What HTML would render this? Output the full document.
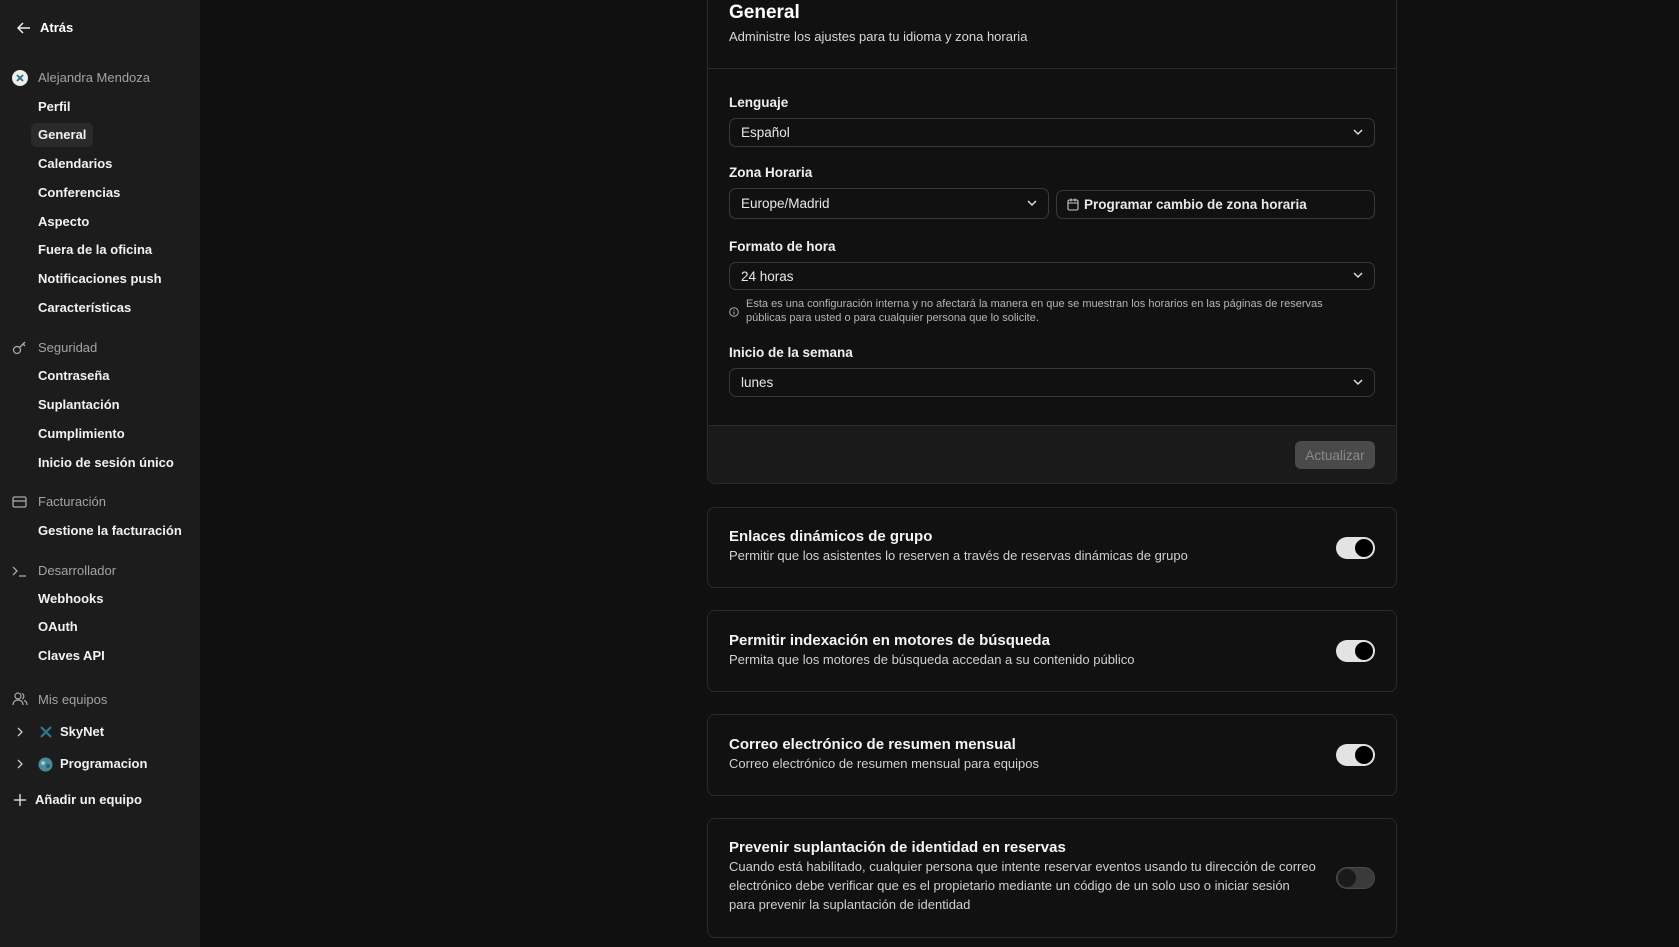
<!DOCTYPE html>
<html><head><meta charset="utf-8"><style>
*{box-sizing:border-box;margin:0;padding:0}
body{width:1679px;height:947px;overflow:hidden;background:#101010;font-family:"Liberation Sans",sans-serif;color:#fff;position:relative}
.side{position:absolute;left:0;top:0;width:200px;height:947px;background:#1c1c1c}
.a{position:absolute;font-size:13px;white-space:nowrap}
.it{left:38px;font-weight:bold;color:#f2f2f2}
.grp{left:38px;color:#a3a3a3}
.ic{position:absolute;left:12px}
.card{position:absolute;left:707px;width:690px;border:1px solid #2a2a2a;border-radius:8px;background:#111}
.sel{position:absolute;border:1px solid #3a3a3a;border-radius:7px;font-size:13.5px;color:#e8e8e8;padding-left:11px;display:flex;align-items:center}
.chev{position:absolute;right:11px;top:50%;margin-top:-4px}
.lbl{position:absolute;left:729px;font-size:13.5px;font-weight:bold;color:#f0f0f0}
.tg{position:absolute;left:1336px;width:39px;height:22px;border-radius:11px;background:#e3e3e3}
.tg::after{content:"";position:absolute;right:2px;top:2px;width:18px;height:18px;border-radius:50%;background:#000}
.tg.off{background:#3a3a3a;border:1px solid #4a4a4a}
.tg.off::after{left:1px;right:auto;top:1px;background:#1a1a1a}
.t{position:absolute;left:729px;font-size:15px;font-weight:bold;color:#f4f4f4}
.d{position:absolute;left:729px;font-size:13px;color:#d0d0d0;line-height:19px}
</style></head><body>
<div class="side">
<svg class="ic" style="top:22px;left:17px" width="14" height="12" viewBox="0 0 14 12"><path d="M13 6H1M6 1L1 6l5 5" stroke="#eee" stroke-width="1.5" fill="none"/></svg>
<div class="a" style="left:40px;top:20px;font-weight:bold">Atrás</div>
<svg class="ic" style="top:70px" width="16" height="16"><circle cx="8" cy="8" r="8" fill="#eee"/><path d="M5 5l6 6M11 5l-6 6" stroke="#2a6f8a" stroke-width="1.8"/></svg>
<div class="a grp" style="top:70px">Alejandra Mendoza</div>
<div class="a it" style="top:99px">Perfil</div>
<div style="position:absolute;left:31px;top:123px;width:62px;height:24px;border-radius:5px;background:#2a2a2a"></div>
<div class="a it" style="top:127px">General</div>
<div class="a it" style="top:156px">Calendarios</div>
<div class="a it" style="top:185px">Conferencias</div>
<div class="a it" style="top:214px">Aspecto</div>
<div class="a it" style="top:242px">Fuera de la oficina</div>
<div class="a it" style="top:271px">Notificaciones push</div>
<div class="a it" style="top:300px">Características</div>
<svg class="ic" style="top:341px" width="16" height="14"><circle cx="5" cy="9" r="3.5" stroke="#aaa" fill="none" stroke-width="1.3"/><path d="M7.5 6.5L13 1M11 3l2 2" stroke="#aaa" stroke-width="1.3" fill="none"/></svg>
<div class="a grp" style="top:340px">Seguridad</div>
<div class="a it" style="top:368px">Contraseña</div>
<div class="a it" style="top:397px">Suplantación</div>
<div class="a it" style="top:426px">Cumplimiento</div>
<div class="a it" style="top:455px">Inicio de sesión único</div>
<svg class="ic" style="top:496px" width="15" height="12"><rect x="1" y="1" width="13" height="10" rx="1.5" stroke="#aaa" fill="none" stroke-width="1.3"/><path d="M1 5h13" stroke="#aaa" stroke-width="1.3"/></svg>
<div class="a grp" style="top:494px">Facturación</div>
<div class="a it" style="top:523px">Gestione la facturación</div>
<svg class="ic" style="top:565px" width="15" height="12"><path d="M1 2l4 4-4 4M7 11h7" stroke="#aaa" stroke-width="1.3" fill="none"/></svg>
<div class="a grp" style="top:563px">Desarrollador</div>
<div class="a it" style="top:591px">Webhooks</div>
<div class="a it" style="top:619px">OAuth</div>
<div class="a it" style="top:648px">Claves API</div>
<svg class="ic" style="top:692px" width="16" height="14"><circle cx="6" cy="4" r="3" stroke="#aaa" fill="none" stroke-width="1.2"/><path d="M1 13c0-3 2-5 5-5s5 2 5 5M10 1.5a3 3 0 010 5.5M12 8.5c2 .5 3 2 3 4.5" stroke="#aaa" fill="none" stroke-width="1.2"/></svg>
<div class="a grp" style="top:692px">Mis equipos</div>
<svg class="ic" style="top:726px;left:16px" width="8" height="12"><path d="M2 2l4 4-4 4" stroke="#ccc" stroke-width="1.3" fill="none"/></svg>
<svg class="ic" style="top:725px;left:39px" width="14" height="14"><path d="M2 2l10 10M12 2L2 12" stroke="#2b7a8c" stroke-width="2.2"/></svg>
<div class="a it" style="top:724px;left:60px">SkyNet</div>
<svg class="ic" style="top:758px;left:16px" width="8" height="12"><path d="M2 2l4 4-4 4" stroke="#ccc" stroke-width="1.3" fill="none"/></svg>
<svg class="ic" style="top:757px;left:38px" width="15" height="15"><circle cx="7.5" cy="7.5" r="7" fill="#4a8a9a"/><circle cx="5" cy="6" r="2" fill="#9cc"/><circle cx="10" cy="9" r="2" fill="#2d5f6e"/></svg>
<div class="a it" style="top:756px;left:60px">Programacion</div>
<svg class="ic" style="top:794px;left:14px" width="12" height="12"><path d="M6 0v12M0 6h12" stroke="#eee" stroke-width="1.3"/></svg>
<div class="a it" style="top:792px;left:35px">Añadir un equipo</div>
</div>

<div class="card" style="top:-10px;height:494px"></div>
<div style="position:absolute;left:708px;top:68px;width:688px;height:1px;background:#2a2a2a"></div>
<div style="position:absolute;left:708px;top:425px;width:688px;height:58px;background:#1a1a1a;border-top:1px solid #2a2a2a;border-radius:0 0 8px 8px"></div>
<div class="a" style="left:729px;top:2px;font-size:19px;font-weight:bold">General</div>
<div class="a" style="left:729px;top:29px;font-size:13px;color:#d8d8d8">Administre los ajustes para tu idioma y zona horaria</div>

<div class="lbl" style="top:95px">Lenguaje</div>
<div class="sel" style="left:729px;top:118px;width:646px;height:29px">Español<svg class="chev" width="10" height="7"><path d="M1 1l4 4 4-4" stroke="#ddd" stroke-width="1.5" fill="none"/></svg></div>
<div class="lbl" style="top:165px">Zona Horaria</div>
<div class="sel" style="left:729px;top:188px;width:320px;height:31px">Europe/Madrid<svg class="chev" width="10" height="7"><path d="M1 1l4 4 4-4" stroke="#ddd" stroke-width="1.5" fill="none"/></svg></div>
<div class="sel" style="left:1056px;top:190px;width:319px;height:29px;padding-left:10px;font-weight:bold"><svg width="12" height="13" style="margin-right:5px"><rect x="1" y="2" width="10" height="10" rx="1.5" stroke="#ccc" fill="none" stroke-width="1.1"/><path d="M1 5h10M4 0.5v3M8 0.5v3" stroke="#ccc" stroke-width="1.1"/></svg>Programar cambio de zona horaria</div>
<div class="lbl" style="top:239px">Formato de hora</div>
<div class="sel" style="left:729px;top:262px;width:646px;height:28px">24 horas<svg class="chev" width="10" height="7"><path d="M1 1l4 4 4-4" stroke="#ddd" stroke-width="1.5" fill="none"/></svg></div>
<svg style="position:absolute;left:729px;top:307px" width="10" height="10"><circle cx="5" cy="5" r="4.3" stroke="#aaa" fill="none"/><path d="M5 4.5v3M5 2.5v1" stroke="#aaa"/></svg>
<div class="a" style="left:746px;top:297px;font-size:11px;color:#b5b5b5;line-height:14px;white-space:normal;width:615px">Esta es una configuración interna y no afectará la manera en que se muestran los horarios en las páginas de reservas públicas para usted o para cualquier persona que lo solicite.</div>
<div class="lbl" style="top:345px">Inicio de la semana</div>
<div class="sel" style="left:729px;top:368px;width:646px;height:29px">lunes<svg class="chev" width="10" height="7"><path d="M1 1l4 4 4-4" stroke="#ddd" stroke-width="1.5" fill="none"/></svg></div>
<div style="position:absolute;left:1295px;top:441px;width:80px;height:28px;border-radius:6px;background:#4a4a4a;color:#8a8a8a;font-size:13.5px;display:flex;align-items:center;justify-content:center">Actualizar</div>

<div class="card" style="top:507px;height:81px"></div>
<div class="t" style="top:528px">Enlaces dinámicos de grupo</div>
<div class="d" style="top:546px">Permitir que los asistentes lo reserven a través de reservas dinámicas de grupo</div>
<div class="tg" style="top:537px"></div>

<div class="card" style="top:610px;height:82px"></div>
<div class="t" style="top:632px">Permitir indexación en motores de búsqueda</div>
<div class="d" style="top:650px">Permita que los motores de búsqueda accedan a su contenido público</div>
<div class="tg" style="top:640px"></div>

<div class="card" style="top:714px;height:82px"></div>
<div class="t" style="top:736px">Correo electrónico de resumen mensual</div>
<div class="d" style="top:754px">Correo electrónico de resumen mensual para equipos</div>
<div class="tg" style="top:744px"></div>

<div class="card" style="top:818px;height:120px"></div>
<div class="t" style="top:839px">Prevenir suplantación de identidad en reservas</div>
<div class="d" style="top:857px;width:590px">Cuando está habilitado, cualquier persona que intente reservar eventos usando tu dirección de correo electrónico debe verificar que es el propietario mediante un código de un solo uso o iniciar sesión para prevenir la suplantación de identidad</div>
<div class="tg off" style="top:867px"></div>
</body></html>
